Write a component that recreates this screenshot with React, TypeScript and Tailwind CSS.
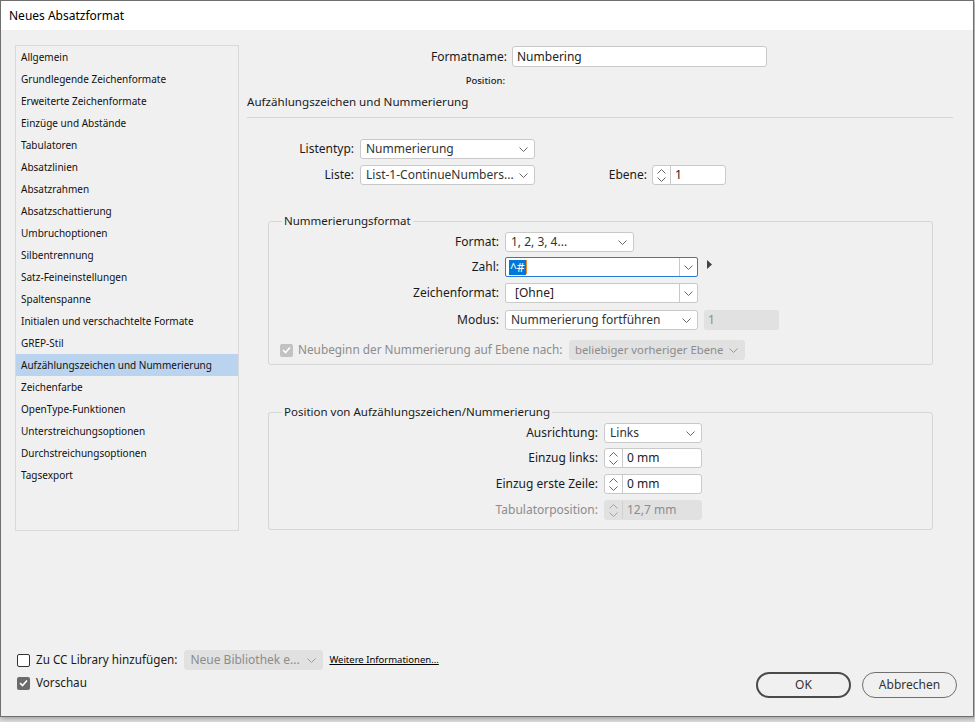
import type { ReactNode } from "react";

const sections = [
  "Allgemein",
  "Grundlegende Zeichenformate",
  "Erweiterte Zeichenformate",
  "Einzüge und Abstände",
  "Tabulatoren",
  "Absatzlinien",
  "Absatzrahmen",
  "Absatzschattierung",
  "Umbruchoptionen",
  "Silbentrennung",
  "Satz-Feineinstellungen",
  "Spaltenspanne",
  "Initialen und verschachtelte Formate",
  "GREP-Stil",
  "Aufzählungszeichen und Nummerierung",
  "Zeichenfarbe",
  "OpenType-Funktionen",
  "Unterstreichungsoptionen",
  "Durchstreichungsoptionen",
  "Tagsexport",
];

function Chevron({ className = "" }: { className?: string }) {
  return (
    <svg width="9" height="5" viewBox="0 0 9 5" className={className}>
      <path d="M0.5 0.5 L4.5 4.5 L8.5 0.5" fill="none" stroke="currentColor" strokeWidth="1" />
    </svg>
  );
}

function Select({ value, className, disabled }: { value: string; className: string; disabled?: boolean }) {
  return (
    <div
      className={`h-[20px] flex items-center justify-between pl-[5px] pr-[6px] rounded-[3px] border overflow-hidden ${
        disabled ? "bg-[#e1e1e1] border-[#e1e1e1] text-[#8c8c8c]" : "bg-white border-[#c9c9c9] text-[#333]"
      } ${className}`}
    >
      <span className="whitespace-nowrap overflow-hidden">{value}</span>
      <Chevron className={`shrink-0 ml-[4px] ${disabled ? "text-[#9a9a9a]" : "text-[#666]"}`} />
    </div>
  );
}

function Combo({ children, className, focus }: { children: ReactNode; className: string; focus?: boolean }) {
  return (
    <div
      className={`h-[20px] flex rounded-[2px] border bg-white ${
        focus ? "border-[#2a7ad8]" : "border-[#c9c9c9]"
      } ${className}`}
    >
      <div className="flex-1 flex items-center pl-[3px] text-[#222]">{children}</div>
      <div className="w-[18px] flex items-center justify-center border-l border-[#c9c9c9]">
        <Chevron className="text-[#666]" />
      </div>
    </div>
  );
}

function Spinner({ value, className, disabled }: { value: string; className: string; disabled?: boolean }) {
  return (
    <div
      className={`h-[20px] flex rounded-[3px] border ${
        disabled ? "bg-[#e1e1e1] border-[#e1e1e1] text-[#8c8c8c]" : "bg-white border-[#c9c9c9] text-[#222]"
      } ${className}`}
    >
      <div
        className={`w-[18px] flex flex-col items-center justify-center gap-[3px] border-r ${
          disabled ? "border-[#d0d0d0] text-[#a0a0a0]" : "border-[#c9c9c9] text-[#666]"
        }`}
      >
        <Chevron className="rotate-180" />
        <Chevron />
      </div>
      <div className="flex-1 flex items-center pl-[4px]">{value}</div>
    </div>
  );
}

function Checkbox({ checked, disabled }: { checked?: boolean; disabled?: boolean }) {
  if (!checked)
    return <div className="w-[13px] h-[13px] rounded-[2px] border border-[#333] bg-white shrink-0" />;
  return (
    <div
      className={`w-[13px] h-[13px] rounded-[2px] flex items-center justify-center shrink-0 ${
        disabled ? "bg-[#c2c2c2]" : "bg-[#6b6b6b]"
      }`}
    >
      <svg width="9" height="8" viewBox="0 0 9 8">
        <path d="M1 4 L3.5 6.5 L8 1.5" fill="none" stroke="white" strokeWidth="1.6" />
      </svg>
    </div>
  );
}

export default function App() {
  return (
    <div className="w-[975px] h-[722px] bg-[#dcdcdc] font-['Noto_Sans',sans-serif] text-[12px] text-[#1a1a1a]">
      <div className="w-[974px] h-[717px] border border-[#6f6f6f] bg-[#f0f0f0] flex flex-col shadow-[1px_1px_5px_rgba(0,0,0,0.35)]">
        <div className="h-[29px] bg-white flex items-center pl-[8px] text-[12px] text-black">Neues Absatzformat</div>

        <div className="flex pt-[15px] pl-[14px]">
          <div className="w-[224px] h-[486px] border border-[#d9d9d9]">
            {sections.map((s) => (
              <div
                key={s}
                className={`h-[22px] flex items-center pl-[5px] text-[10px] text-[#111] ${
                  s === "Aufzählungszeichen und Nummerierung" ? "bg-[#bad4ef]" : ""
                }`}
              >
                {s}
              </div>
            ))}
          </div>

          <div className="ml-[8px] w-[706px] flex flex-col">
            <div className="mt-[1px] flex items-center">
              <span className="w-[260px] text-right">Formatname:</span>
              <div className="ml-[5px] w-[255px] h-[21px] bg-white border border-[#c9c9c9] rounded-[3px] flex items-center pl-[4px] text-[#222]">
                Numbering
              </div>
            </div>
            <div className="mt-[7px] h-[14px] flex items-center">
              <span className="w-[258px] text-right text-[9.5px] font-medium">Position:</span>
            </div>
            <div className="mt-[6px] h-[16px] flex items-center text-[11.6px]">Aufzählungszeichen und Nummerierung</div>
            <div className="mt-[7px] border-t border-[#d6d6d6]" />

            <div className="mt-[21px] flex items-center">
              <span className="w-[107px] text-right">Listentyp:</span>
              <Select value="Nummerierung" className="ml-[6px] w-[175px]" />
            </div>
            <div className="mt-[6px] flex items-center">
              <span className="w-[107px] text-right">Liste:</span>
              <Select value="List-1-ContinueNumbers..." className="ml-[6px] w-[175px]" />
              <span className="w-[112px] text-right">Ebene:</span>
              <Spinner value="1" className="ml-[5px] w-[74px]" />
            </div>

            <fieldset className="mt-[28px] ml-[21px] w-[665px] border border-[#d6d6d6] rounded-[3px] pb-[4px]">
              <legend className="ml-[13px] px-[2px] leading-[16px] text-[11.5px]">Nummerierungsformat</legend>
              <div className="mt-[3px] flex items-center">
                <span className="w-[230px] text-right">Format:</span>
                <Select value="1, 2, 3, 4..." className="ml-[6px] w-[129px]" />
              </div>
              <div className="mt-[5px] flex items-center">
                <span className="w-[230px] text-right">Zahl:</span>
                <Combo className="ml-[6px] w-[193px]" focus>
                  <span className="bg-[#0078d7] text-white px-[1px] leading-[15px]">^#</span>
                  <span className="w-[1px] h-[14px] bg-[#f08a24]" />
                </Combo>
                <svg width="6" height="9" viewBox="0 0 6 9" className="ml-[9px] -mt-[6px]">
                  <path d="M0 0 L5 4.5 L0 9 Z" fill="#444" />
                </svg>
              </div>
              <div className="mt-[6px] flex items-center">
                <span className="w-[230px] text-right">Zeichenformat:</span>
                <Combo className="ml-[6px] w-[193px]">
                  <span className="pl-[6px]">[Ohne]</span>
                </Combo>
              </div>
              <div className="mt-[7px] flex items-center">
                <span className="w-[230px] text-right">Modus:</span>
                <Select value="Nummerierung fortführen" className="ml-[6px] w-[193px]" />
                <div className="ml-[6px] w-[75px] h-[20px] bg-[#e1e1e1] text-[#8c8c8c] flex items-center pl-[4px] rounded-[2px]">
                  1
                </div>
              </div>
              <div className="mt-[10px] flex items-center">
                <div className="ml-[11px]">
                  <Checkbox checked disabled />
                </div>
                <span className="ml-[5px] text-[#8c8c8c] text-[11.8px] w-[271px]">
                  Neubeginn der Nummerierung auf Ebene nach:
                </span>
                <Select value="beliebiger vorheriger Ebene" className="w-[176px] text-[11.3px]" disabled />
              </div>
            </fieldset>

            <fieldset className="mt-[39px] ml-[21px] w-[665px] border border-[#d6d6d6] rounded-[3px] pb-[9px]">
              <legend className="ml-[13px] px-[2px] leading-[16px] text-[11.5px]">
                Position von Aufzählungszeichen/Nummerierung
              </legend>
              <div className="mt-[3px] flex items-center">
                <span className="w-[329px] text-right">Ausrichtung:</span>
                <Select value="Links" className="ml-[6px] w-[98px]" />
              </div>
              <div className="mt-[5px] flex items-center">
                <span className="w-[329px] text-right">Einzug links:</span>
                <Spinner value="0 mm" className="ml-[6px] w-[98px]" />
              </div>
              <div className="mt-[6px] flex items-center">
                <span className="w-[329px] text-right">Einzug erste Zeile:</span>
                <Spinner value="0 mm" className="ml-[6px] w-[98px]" />
              </div>
              <div className="mt-[6px] flex items-center">
                <span className="w-[329px] text-right text-[#8c8c8c]">Tabulatorposition:</span>
                <Spinner value="12,7 mm" className="ml-[6px] w-[98px]" disabled />
              </div>
            </fieldset>
          </div>
        </div>

        <div className="mt-[119px] flex justify-between pl-[16px] pr-[16px]">
          <div className="flex flex-col">
            <div className="h-[20px] flex items-center">
              <Checkbox />
              <span className="ml-[6px] text-[11.7px]">Zu CC Library hinzufügen:</span>
              <Select value="Neue Bibliothek e..." className="ml-[7px] w-[139px]" disabled />
              <span className="ml-[6px] text-[9.5px] underline text-black">Weitere Informationen...</span>
            </div>
            <div className="mt-[5px] h-[16px] flex items-center">
              <Checkbox checked />
              <span className="ml-[6px] text-[11.7px]">Vorschau</span>
            </div>
          </div>
          <div className="mt-[22px] flex gap-[11px]">
            <button className="w-[95px] h-[26px] rounded-full border-2 border-[#4a4a4a] text-[12px] text-[#333]">OK</button>
            <button className="w-[95px] h-[26px] rounded-full border border-[#6f6f6f] text-[12px] text-[#333]">
              Abbrechen
            </button>
          </div>
        </div>
      </div>
    </div>
  );
}
